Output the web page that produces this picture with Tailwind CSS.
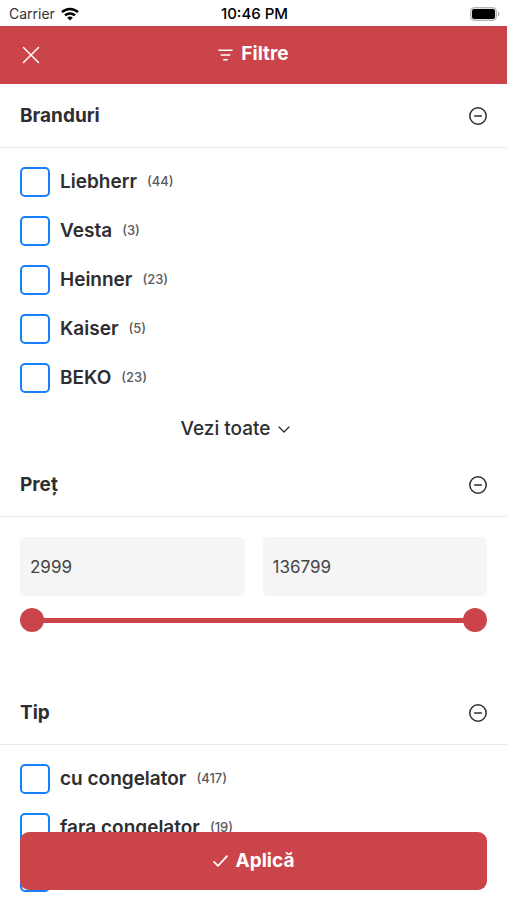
<!DOCTYPE html>
<html lang="ro">
<head>
  <meta charset="UTF-8" />
  <meta name="viewport" content="width=device-width, initial-scale=1.0" />
  <title>Filtre</title>
  <script src="https://cdn.jsdelivr.net/npm/@tailwindcss/browser@4"></script>
</head>
<body class="bg-white text-[#2e2e30] font-['Inter','Liberation_Sans',sans-serif]">
  <div class="relative h-screen flex flex-col overflow-hidden">

    <!-- Status bar -->
    <div class="grid grid-cols-3 items-center h-[26px] pt-[2px] pl-[9px] pr-[7px] shrink-0 text-sm text-black">
      <div class="flex items-center gap-[6px]">
        <span class="text-[#333]">Carrier</span>
        <svg class="w-[18px] h-[14px]" viewBox="0 0 18 14" fill="none" stroke="currentColor" stroke-width="2.5" aria-hidden="true">
          <path d="M1 5.2a11.6 11.6 0 0 1 16 0" />
          <path d="M4 8.4a7.3 7.3 0 0 1 10 0" />
          <path d="M9 13.6 6.2 10.8a4 4 0 0 1 5.6 0z" fill="currentColor" stroke="none" />
        </svg>
      </div>
      <span class="text-center text-[15px] leading-5 font-medium">10:46 PM</span>
      <svg class="justify-self-end w-[30px] h-[14px]" viewBox="0 0 30 14" aria-hidden="true">
        <rect x="0.5" y="0.5" width="26" height="13" rx="3.8" fill="#ddd" stroke="#b5b5b5" />
        <rect x="2" y="2" width="23" height="10" rx="2.2" fill="#000" />
        <path d="M28 4.6c1.9.8 1.9 4 0 4.8z" fill="#aaa" />
      </svg>
    </div>

    <!-- Title bar -->
    <header class="grid grid-cols-[1fr_auto_1fr] items-center h-[58px] px-[22px] shrink-0 bg-[#cb444a] text-white">
      <button type="button" aria-label="Închide" class="justify-self-start">
        <svg class="w-[18px] h-[18px]" viewBox="0 0 18 18" fill="none" stroke="currentColor" stroke-width="1.5" stroke-linecap="round">
          <path d="M1.5 1.5l15 15M16.5 1.5l-15 15" />
        </svg>
      </button>
      <h1 class="flex items-center gap-2 pb-[2px] text-[19px] leading-6 font-bold">
        <svg class="w-[15px] h-3 mt-[2px]" viewBox="0 0 15 12" fill="none" stroke="currentColor" stroke-width="1.6" stroke-linecap="round" aria-hidden="true">
          <path d="M1 1.2h13M3.3 6h8.4M5.8 10.8h3.4" />
        </svg>
        Filtre
      </h1>
    </header>

    <main class="flex-1 overflow-y-auto [scrollbar-width:none]">
      <!-- Branduri -->
      <section>
        <div class="flex items-center justify-between h-16 px-5 border-b border-[#e8e8ea]">
          <h2 class="text-[19px] leading-6 font-bold">Branduri</h2>
          <button type="button" aria-label="Restrânge Branduri">
            <svg class="w-[18px] h-[18px]" viewBox="0 0 18 18" fill="none" stroke="currentColor" stroke-width="1.5" stroke-linecap="round">
              <circle cx="9" cy="9" r="8.2" /><path d="M5.6 9h6.8" />
            </svg>
          </button>
        </div>
        <div class="flex flex-col gap-[19px] px-5 pt-[19px]">
          <label class="flex items-center h-[30px]">
            <input type="checkbox" class="appearance-none size-[30px] border-2 border-[#1680fb] rounded-[5px] checked:bg-[#1680fb]">
            <span class="ml-[10px] text-[19px] leading-6 font-semibold">Liebherr</span>
            <span class="ml-[10px] text-[13px] font-medium text-[#5a5a5c]">(44)</span>
          </label>
          <label class="flex items-center h-[30px]">
            <input type="checkbox" class="appearance-none size-[30px] border-2 border-[#1680fb] rounded-[5px] checked:bg-[#1680fb]">
            <span class="ml-[10px] text-[19px] leading-6 font-semibold">Vesta</span>
            <span class="ml-[10px] text-[13px] font-medium text-[#5a5a5c]">(3)</span>
          </label>
          <label class="flex items-center h-[30px]">
            <input type="checkbox" class="appearance-none size-[30px] border-2 border-[#1680fb] rounded-[5px] checked:bg-[#1680fb]">
            <span class="ml-[10px] text-[19px] leading-6 font-semibold">Heinner</span>
            <span class="ml-[10px] text-[13px] font-medium text-[#5a5a5c]">(23)</span>
          </label>
          <label class="flex items-center h-[30px]">
            <input type="checkbox" class="appearance-none size-[30px] border-2 border-[#1680fb] rounded-[5px] checked:bg-[#1680fb]">
            <span class="ml-[10px] text-[19px] leading-6 font-semibold">Kaiser</span>
            <span class="ml-[10px] text-[13px] font-medium text-[#5a5a5c]">(5)</span>
          </label>
          <label class="flex items-center h-[30px]">
            <input type="checkbox" class="appearance-none size-[30px] border-2 border-[#1680fb] rounded-[5px] checked:bg-[#1680fb]">
            <span class="ml-[10px] text-[19px] leading-6 font-semibold">BEKO</span>
            <span class="ml-[10px] text-[13px] font-medium text-[#5a5a5c]">(23)</span>
          </label>
        </div>
        <div class="flex justify-center pt-6 pb-3 pr-9">
          <button type="button" class="flex items-center gap-2 text-[19px] leading-6 font-medium">
            Vezi toate
            <svg class="w-3 h-[7px]" viewBox="0 0 12 7" fill="none" stroke="currentColor" stroke-width="1.3" stroke-linecap="round" stroke-linejoin="round" aria-hidden="true">
              <path d="M1 1l5 5 5-5" />
            </svg>
          </button>
        </div>
      </section>

      <!-- Preț -->
      <section>
        <div class="flex items-center justify-between h-16 px-5 border-b border-[#e8e8ea]">
          <h2 class="text-[19px] leading-6 font-bold">Preț</h2>
          <button type="button" aria-label="Restrânge Preț">
            <svg class="w-[18px] h-[18px]" viewBox="0 0 18 18" fill="none" stroke="currentColor" stroke-width="1.5" stroke-linecap="round">
              <circle cx="9" cy="9" r="8.2" /><path d="M5.6 9h6.8" />
            </svg>
          </button>
        </div>
        <div class="px-5 pt-5 pb-[49px]">
          <div class="grid grid-cols-2 gap-[18px]">
            <input type="text" inputmode="numeric" aria-label="Preț minim" value="2999" class="w-full h-[59px] px-[10px] rounded-[5px] bg-[#f5f5f5] text-[17px] text-[#444]">
            <input type="text" inputmode="numeric" aria-label="Preț maxim" value="136799" class="w-full h-[59px] px-[10px] rounded-[5px] bg-[#f5f5f5] text-[17px] text-[#444]">
          </div>
          <div class="grid items-center h-6 mt-3">
            <div class="col-start-1 row-start-1 h-[5px] mx-3 bg-[#cb444a]"></div>
            <input type="range" min="2999" max="136799" value="2999" aria-label="Preț minim" class="col-start-1 row-start-1 w-full h-6 appearance-none bg-transparent pointer-events-none [&::-webkit-slider-thumb]:appearance-none [&::-webkit-slider-thumb]:pointer-events-auto [&::-webkit-slider-thumb]:size-6 [&::-webkit-slider-thumb]:rounded-full [&::-webkit-slider-thumb]:bg-[#cb444a]">
            <input type="range" min="2999" max="136799" value="136799" aria-label="Preț maxim" class="col-start-1 row-start-1 w-full h-6 appearance-none bg-transparent pointer-events-none [&::-webkit-slider-thumb]:appearance-none [&::-webkit-slider-thumb]:pointer-events-auto [&::-webkit-slider-thumb]:size-6 [&::-webkit-slider-thumb]:rounded-full [&::-webkit-slider-thumb]:bg-[#cb444a]">
          </div>
        </div>
      </section>

      <!-- Tip -->
      <section>
        <div class="flex items-center justify-between h-16 px-5 border-b border-[#e8e8ea]">
          <h2 class="text-[19px] leading-6 font-bold">Tip</h2>
          <button type="button" aria-label="Restrânge Tip">
            <svg class="w-[18px] h-[18px]" viewBox="0 0 18 18" fill="none" stroke="currentColor" stroke-width="1.5" stroke-linecap="round">
              <circle cx="9" cy="9" r="8.2" /><path d="M5.6 9h6.8" />
            </svg>
          </button>
        </div>
        <div class="flex flex-col gap-[19px] px-5 pt-[19px]">
          <label class="flex items-center h-[30px]">
            <input type="checkbox" class="appearance-none size-[30px] border-2 border-[#1680fb] rounded-[5px] checked:bg-[#1680fb]">
            <span class="ml-[10px] text-[19px] leading-6 font-semibold">cu congelator</span>
            <span class="ml-[10px] text-[13px] font-medium text-[#5a5a5c]">(417)</span>
          </label>
          <label class="flex items-center h-[30px]">
            <input type="checkbox" class="appearance-none size-[30px] border-2 border-[#1680fb] rounded-[5px] checked:bg-[#1680fb]">
            <span class="ml-[10px] text-[19px] leading-6 font-semibold">fara congelator</span>
            <span class="ml-[10px] text-[13px] font-medium text-[#5a5a5c]">(19)</span>
          </label>
          <input type="checkbox" aria-label="Alt tip" class="appearance-none size-[30px] border-2 border-[#1680fb] rounded-[5px] checked:bg-[#1680fb]">
        </div>
      </section>
    </main>

    <!-- Apply button, floats over the list -->
    <button type="button" class="absolute inset-x-5 bottom-[10px] h-[58px] flex items-center justify-center gap-2 rounded-[9px] bg-[#cb444a] text-white text-[19px] leading-6 font-bold">
      <svg class="w-[15px] h-3" viewBox="0 0 15 12" fill="none" stroke="currentColor" stroke-width="1.7" stroke-linecap="round" stroke-linejoin="round" aria-hidden="true">
        <path d="M1 6.8l4 4L14 1.2" />
      </svg>
      Aplică
    </button>
  </div>
</body>
</html>
